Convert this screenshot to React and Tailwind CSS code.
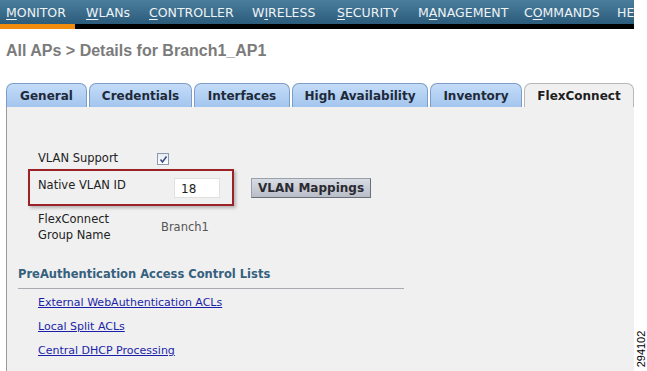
export default function App() {
  const nav = [
    ["M", "ONITOR"],
    ["W", "LANs"],
    ["C", "ONTROLLER"],
    ["WI", "RELESS", 1],
    ["S", "ECURITY"],
    ["MA", "NAGEMENT", 1],
    ["CO", "MMANDS", 1],
  ];
  const navX = [6, 86, 149, 252, 337, 418, 524, 617];
  const tabs = [
    ["General", 81],
    ["Credentials", 103],
    ["Interfaces", 96],
    ["High Availability", 136],
    ["Inventory", 92],
  ];
  const renderNav = (n) => {
    if (n[2]) {
      return (
        <>
          {n[0][0]}
          <span className="underline underline-offset-2">{n[0][1]}</span>
          {n[1]}
        </>
      );
    }
    return (
      <>
        <span className="underline underline-offset-2">{n[0]}</span>
        {n[1]}
      </>
    );
  };
  return (
    <div className="flex w-[647px] h-[371px] overflow-hidden bg-white" style={{ fontFamily: "'DejaVu Sans', Verdana, sans-serif" }}>
      <div className="w-[634px] flex flex-col shrink-0">
        <div className="h-[24px] bg-gradient-to-b from-[#4a7d9c] to-[#2c5c7b] relative text-[12.5px] text-[#eef3f6] shrink-0 overflow-hidden">
          {nav.map((n, i) => (
            <span key={i} className="absolute top-[5px] leading-[16px] whitespace-nowrap" style={{ left: navX[i] }}>
              {renderNav(n)}
            </span>
          ))}
          <span className="absolute top-[5px] leading-[16px]" style={{ left: navX[7] }}>HE</span>
        </div>
        <div className="flex h-[5px] shrink-0">
          <div className="w-[75px] bg-[#f28c0f]" />
          <div className="flex-1 bg-black" />
        </div>
        <div className="pl-[6px] pt-[13px] h-[54px] shrink-0 text-[16px] font-bold text-[#7b7b7b] leading-[18px]" style={{ fontFamily: "'Liberation Sans', Arial, sans-serif" }}>
          All APs &gt; Details for Branch1_AP1
        </div>
        <div className="flex pl-[6px] h-[24px] gap-[2px] shrink-0 items-end">
          {tabs.map(([t, w]) => (
            <div key={t} className="h-[24px] rounded-t-[7px] border border-b-0 border-[#7d9dc6] bg-gradient-to-b from-[#c4dcf8] to-[#a3c5ee] flex items-center justify-center text-[12px] font-bold text-[#1e2a3a]" style={{ width: w }}>
              {t}
            </div>
          ))}
          <div className="h-[24px] w-[110px] rounded-t-[7px] border border-b-0 border-[#b8b8b8] bg-[#f0f0f0] flex items-center justify-center text-[12px] font-bold text-[#1e1e1e]">
            FlexConnect
          </div>
        </div>
        <div className="ml-[6px] flex-1 bg-[#f0f0f0] border-l border-[#9a9a9a] text-[11.5px] text-[#222]">
          <div className="pt-[44px] pl-[31px] flex items-center h-[60px]">
            <span className="w-[119px]">VLAN Support</span>
            <span className="w-[12px] h-[12px] border border-[#8a9ab0] bg-gradient-to-b from-[#e8ecf2] to-[#ffffff] flex items-center justify-center">
              <svg width="9" height="9" viewBox="0 0 9 9">
                <path d="M1.5 4.5 L3.5 7 L7.5 1.5" stroke="#3a4f8a" strokeWidth="1.6" fill="none" />
              </svg>
            </span>
          </div>
          <div className="flex items-center mt-[2px]">
            <div className="ml-[21px] w-[206px] h-[37px] border-2 border-[#9b2226] shadow-[2px_2px_3px_rgba(0,0,0,0.25)] flex pl-[8px]">
              <span className="w-[136px] pt-[6px]">Native VLAN ID</span>
              <span className="mt-[7px] w-[46px] h-[20px] bg-white border border-[#e0e0e0] pl-[6px] leading-[20px] text-[12px]">18</span>
            </div>
            <button className="ml-[17px] w-[120px] h-[20px] bg-gradient-to-b from-[#d8dce4] to-[#b8bdc8] border border-[#9aa0aa] border-r-[#6a707a] border-b-[#6a707a] text-[12px] font-bold text-[#2a2a30] leading-[18px]">
              VLAN Mappings
            </button>
          </div>
          <div className="flex items-center pl-[31px] mt-[3px] h-[36px] leading-[16px]">
            <span className="w-[123px]">FlexConnect<br />Group Name</span>
            <span className="text-[#555]">Branch1</span>
          </div>
          <div className="pl-[11px] mt-[22px]">
            <div className="text-[11.5px] font-bold text-[#35607e] leading-[14px]">PreAuthentication Access Control Lists</div>
            <div className="w-[386px] h-px bg-[#a8abb0] mt-[7px]" />
            <div className="pl-[20px] text-[11px] text-[#1b1fa8] leading-[12px]">
              <div className="underline mt-[8px]">External WebAuthentication ACLs</div>
              <div className="underline mt-[12px]">Local Split ACLs</div>
              <div className="underline mt-[12px]">Central DHCP Processing</div>
            </div>
          </div>
        </div>
      </div>
      <div className="flex-1 relative bg-white">
        <span className="absolute left-[-15px] top-[343px] w-[44px] text-center -rotate-90 text-[11px] text-black leading-[12px]" style={{ fontFamily: "'Liberation Sans', Arial, sans-serif" }}>
          294102
        </span>
      </div>
    </div>
  );
}
